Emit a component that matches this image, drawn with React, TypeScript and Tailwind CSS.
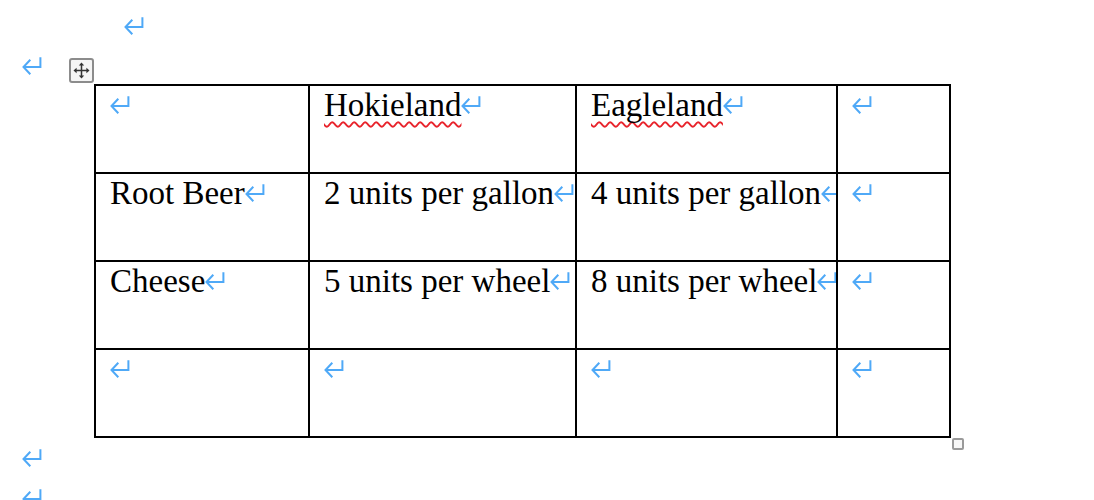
import React from "react";

const Ret = ({ className = "" }: { className?: string }) => (
  <svg
    width="20"
    height="18"
    viewBox="0 0 20 18"
    fill="none"
    stroke="#4fa9f7"
    strokeWidth="2"
    className={"inline-block shrink-0 " + className}
  >
    <path d="M18.4 0.3V10H1.8" />
    <path d="M8.3 2.8L1.5 10L8.3 17.2" />
  </svg>
);

const Cell = ({ text, wavy = false }: { text?: string; wavy?: boolean }) => (
  <div className="bg-white overflow-hidden whitespace-nowrap pl-[14px] text-[33px] leading-[38px] text-black">
    {text ? (
      wavy ? (
        <span className="underline decoration-wavy decoration-[#e8232b] decoration-[1.5px] underline-offset-[5px] [text-decoration-skip-ink:none]">
          {text}
        </span>
      ) : (
        <span>{text}</span>
      )
    ) : null}
    <Ret className="align-[2px]" />
  </div>
);

export default function App() {
  const rows: { text?: string; wavy?: boolean }[][] = [
    [{}, { text: "Hokieland", wavy: true }, { text: "Eagleland", wavy: true }, {}],
    [{ text: "Root Beer" }, { text: "2 units per gallon" }, { text: "4 units per gallon" }, {}],
    [{ text: "Cheese" }, { text: "5 units per wheel" }, { text: "8 units per wheel" }, {}],
    [{}, {}, {}, {}],
  ];
  return (
    <div className="w-[1094px] h-[500px] overflow-hidden bg-white font-['Liberation_Serif','Times_New_Roman',serif]">
      <div className="h-[40px] pl-[124px] pt-[17px] leading-none">
        <Ret />
      </div>
      <div className="h-[44px] pl-[22px] pt-[17px] leading-none">
        <Ret />
      </div>
      <div className="pl-[94px]">
        <div className="relative w-[857px]">
          <div className="absolute right-full top-[-26px] w-[25px] h-[25px] rounded-[3px] border-2 border-[#8c8c8c] bg-[#f5f5f5] flex items-center justify-center">
            <svg width="17" height="17" viewBox="0 0 17 17" fill="#333" stroke="#333">
              <path d="M8.5 3V14M3 8.5H14" strokeWidth="1.5" />
              <path d="M8.5 0.5L5.8 3.6H11.2Z" stroke="none" />
              <path d="M8.5 16.5L5.8 13.4H11.2Z" stroke="none" />
              <path d="M0.5 8.5L3.6 5.8V11.2Z" stroke="none" />
              <path d="M16.5 8.5L13.4 5.8V11.2Z" stroke="none" />
            </svg>
          </div>
          <div className="grid grid-cols-[212px_265px_259px_111px] auto-rows-[86px] gap-[2px] p-[2px] bg-black">
            {rows.map((r, i) =>
              r.map((c, j) => <Cell key={i + "-" + j} text={c.text} wavy={c.wavy} />)
            )}
          </div>
          <div className="absolute left-[calc(100%+1px)] top-full w-[12px] h-[12px] rounded-[2px] border-2 border-[#9a9a9a] bg-[#f7f7f7]" />
        </div>
      </div>
      <div className="h-[39px] pl-[22px] pt-[11px] leading-none">
        <Ret />
      </div>
      <div className="h-[39px] pl-[22px] pt-[12px] leading-none">
        <Ret />
      </div>
    </div>
  );
}
